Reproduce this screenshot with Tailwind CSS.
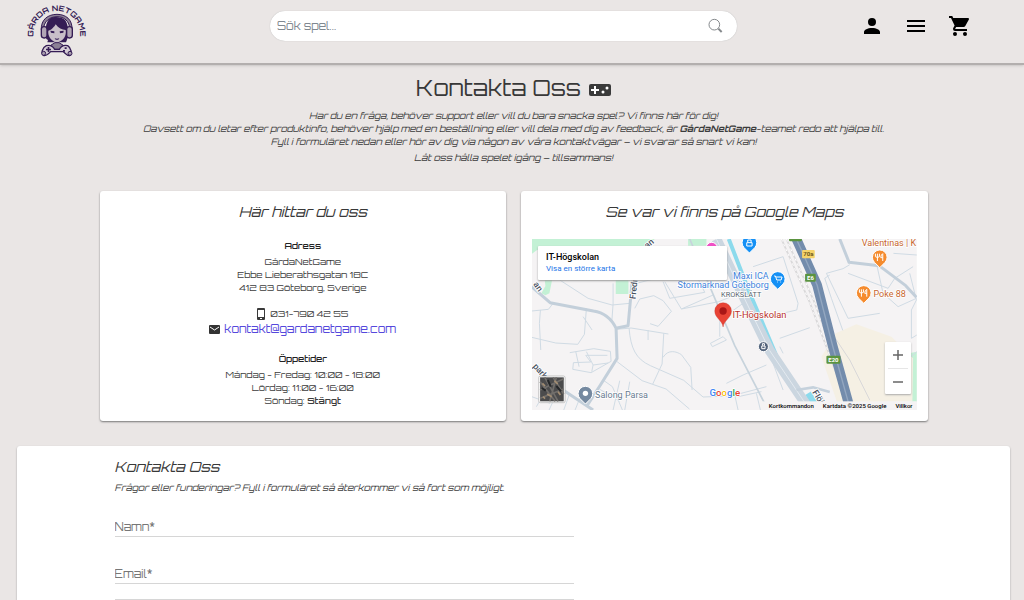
<!DOCTYPE html>
<html lang="sv">
<head>
<meta charset="utf-8">
<meta name="viewport" content="width=device-width, initial-scale=1">
<title>Kontakta Oss – GårdaNetGame</title>
<script src="https://cdn.jsdelivr.net/npm/@tailwindcss/browser@4"></script>
</head>
<body class="bg-[#eae6e5] font-['Orbitron','DejaVu_Sans',sans-serif] text-[9px] leading-[13px] text-[#3c3c3c]">
<header class="flex h-[65px] items-start border-b-2 border-[#b3afae] pr-[52px] pl-5 shadow-sm">
  <a href="#" aria-label="Gårda NetGame" class="h-[62px] w-20 shrink-0">
    <svg viewBox="0 0 240 186" class="h-full w-full" fill="#351c55">
      <path id="arc" d="M44 126A70 70 0 1 1 176 126" fill="none"/>
      <text font-weight="700" font-size="23"><textPath href="#arc" startOffset="50%" text-anchor="middle">GÅRDA NETGAME</textPath></text>
      <path d="M64 90C62 58 85 43 111 43S158 58 156 90L150 91C149 62 132 50 111 50S71 63 70 90Z" fill="#8c8095" stroke="#351c55" stroke-width="3"/>
      <path d="M79 117C72 98 78 61 91 55C101 48 128 50 136 61C145 75 149 105 141 119L138 127L82 127L84 120Z"/>
      <path d="M85 92C95 90 103 80 107 73C115 84 126 90 137 90C140 109 130 122 111 128C92 122 83 108 85 92Z" fill="#c9bfc9"/>
      <path d="M91 92l12 2v6l-10-2zM119 94l12-2-1 6-10 2zM104 114q7 4 14 0l-3 5h-8z"/>
      <rect x="64" y="80" width="17" height="34" rx="8" fill="#b1a5b5" stroke="#351c55" stroke-width="4"/>
      <rect x="140" y="80" width="17" height="34" rx="8" fill="#b1a5b5" stroke="#351c55" stroke-width="4"/>
      <path d="M92 136L105 128L117 128L130 136L126 148L96 148Z" fill="#8c8095" stroke="#351c55" stroke-width="3"/>
      <path d="M79 137C90 134 99 139 104 148L118 148C123 139 132 134 143 137C154 144 158 164 149 167C142 168 136 160 130 155L92 155C84 164 78 169 70 166C62 160 67 143 79 137Z" fill="#d5ccd5" stroke="#351c55" stroke-width="4"/>
      <path d="M83 141v5h-5v5h5v5h5v-5h5v-5h-5v-5zM134 142h6v5h-6zM129 150h6v5h-6z"/>
      <circle cx="71" cy="160" r="6" fill="#a99eae" stroke="#351c55" stroke-width="3"/>
      <circle cx="150" cy="160" r="6" fill="#a99eae" stroke="#351c55" stroke-width="3"/>
    </svg>
  </a>
  <form class="mt-[11px] mr-[123px] ml-[170px] flex h-[30px] flex-1 items-center rounded-full bg-white pr-[14px] pl-[7px] shadow-[0_0_1px_#aaa]">
    <input type="search" aria-label="Sök spel" placeholder="Sök spel..." class="min-w-0 flex-1 bg-transparent text-[11px] outline-none placeholder:text-[#808890]">
    <button type="button" aria-label="Sök">
      <svg class="block h-4 w-4" viewBox="0 0 24 24" fill="none" stroke="#85898c"><circle cx="11" cy="10" r="8" stroke-width="1.500"/><path d="M17 16l5 5" stroke-width="3"/></svg>
    </button>
  </form>
  <nav class="mt-[14px] flex gap-5 text-black">
    <a href="#" aria-label="Konto"><svg class="block h-6 w-6" viewBox="0 0 24 24" fill="currentColor"><path d="M12 4a4 4 0 0 1 4 4 4 4 0 0 1-4 4 4 4 0 0 1-4-4 4 4 0 0 1 4-4m0 10c4.420 0 8 1.790 8 4v2H4v-2c0-2.210 3.580-4 8-4Z"/></svg></a>
    <button type="button" aria-label="Meny"><svg class="block h-6 w-6" viewBox="0 0 24 24" fill="currentColor"><path d="M3 6h18v2H3zM3 11h18v2H3zM3 16h18v2H3z"/></svg></button>
    <a href="#" aria-label="Kundvagn"><svg class="block h-6 w-6" viewBox="0 0 24 24" fill="currentColor"><path d="M17 18a2 2 0 0 1 2 2 2 2 0 0 1-2 2 2 2 0 0 1-2-2c0-1.110.89-2 2-2M1 2h3.270l.94 2H20a1 1 0 0 1 1 1c0 .17-.05.34-.12.5l-3.580 6.470c-.34.61-1 1.030-1.750 1.030H8.100l-.9 1.630-.03.12a.25.25 0 0 0 .25.25H19v2H7a2 2 0 0 1-2-2c0-.35.09-.68.24-.96l1.360-2.450L3 4H1V2m6 16a2 2 0 0 1 2 2 2 2 0 0 1-2 2 2 2 0 0 1-2-2c0-1.110.89-2 2-2Z"/></svg></a>
  </nav>
</header>

<main class="pr-[14px] pl-[17px]">
  <section class="pt-[7px] text-center">
    <h1 class="flex items-center justify-center gap-2 text-[22px] leading-8 text-[#383838]">Kontakta Oss
      <svg class="mt-[3px] h-3 w-[22px]" viewBox="0 0 22 12"><rect width="22" height="12" rx="2" fill="#3a3a3a"/><path d="M5 2h2v3h3v2H7v3H5V7H2V5h3z" fill="#fff"/><circle cx="14" cy="8" r="1.500" fill="#fff"/><circle cx="18" cy="4" r="1.500" fill="#fff"/></svg>
    </h1>
    <p class="mt-[5px] italic">Har du en fråga, behöver support eller vill du bara snacka spel? Vi finns här för dig!<br>Oavsett om du letar efter produktinfo, behöver hjälp med en beställning eller vill dela med dig av feedback, är <strong>GårdaNetGame</strong>-teamet redo att hjälpa till.<br>Fyll i formuläret nedan eller hör av dig via någon av våra kontaktvägar – vi svarar så snart vi kan!</p>
    <p class="mt-[3px] italic">Låt oss hålla spelet igång – tillsammans!</p>
  </section>

  <div class="mx-auto mt-[27px] grid max-w-[828px] grid-cols-2 gap-[15px] text-center">
    <section class="rounded-[3px] bg-white pt-[11px] pb-[14px] shadow-[0_1px_2px_#777]">
      <h2 class="text-sm leading-5 text-[#383838] italic">Här hittar du oss</h2>
      <h3 class="mt-[17px] font-medium text-[#222]">Adress</h3>
      <address class="not-italic">
        <p class="mt-[3px]">GårdaNetGame<br>Ebbe Lieberathsgatan 18C<br>412 83 Göteborg, Sverige</p>
        <p class="mt-3 flex items-center justify-center gap-[5px] leading-4"><svg class="h-3 w-2" viewBox="0 0 8 12"><path fill="#3a3a3a" fill-rule="evenodd" d="M1 0h6a1 1 0 0 1 1 1v10a1 1 0 0 1-1 1H1a1 1 0 0 1-1-1V1a1 1 0 0 1 1-1zm0 2v7h6V2zm2 8v1h2v-1z"/></svg>031-790 42 55</p>
        <p class="flex items-center justify-center gap-1 text-[11px] leading-[14px]"><svg class="h-[9px] w-[11px]" viewBox="0 0 11 9"><rect width="11" height="9" rx="1" fill="#333"/><path d="M1 2l4.500 3L10 2" fill="none" stroke="#fff"/></svg><a href="mailto:kontakt@gardanetgame.com" class="text-[#5548dc]">kontakt@gardanetgame.com</a></p>
      </address>
      <h3 class="mt-[16px] font-medium text-[#222]">Öppetider</h3>
      <p class="mt-[3px]">Måndag - Fredag: 10:00 - 18:00<br>Lördag: 11:00 - 16:00<br>Söndag: <strong class="font-semibold">Stängt</strong></p>
    </section>

    <section class="rounded-[3px] bg-white px-[11px] pt-[11px] pb-[10px] shadow-[0_1px_2px_#777]">
      <h2 class="text-sm leading-5 text-[#383838] italic">Se var vi finns på Google Maps</h2>
      <div class="relative mt-[17px] h-[171px] overflow-hidden text-left font-[Roboto,sans-serif]">
        <svg class="h-full w-full" viewBox="36 27 1155 513" preserveAspectRatio="xMidYMid slice" font-family="Roboto, sans-serif">
          <rect x="36" y="27" width="1155" height="513" fill="#f5f3f4"/>
          <path d="M36 27H405L370 60H52L36 72zM505 27h55v20h-55zM75 150h22l-8 40-12 6-12-6 12-22zM288 150h38v42h-38zM1168 370l23-5v150h-15z" fill="#c3f1d5"/>
          <path d="M905 380L948 310L1010 283L1115 320L1180 385L1178 514L1060 516L1000 540H960z" fill="#f5f0e4"/>
          <g fill="none" stroke="#d0dbe4" stroke-width="3">
            <path d="M36 243l50-5 14-18M62 240l-3 40 4 80M36 322l72 17 66 4 20-30 6-78M190 260l27 40M120 150l85 55 72 20 53-5M280 160v62l-4 55M330 220l20-60 80-20M345 235l15-28 42-10 28 15 25 32-40 45-24-8M290 298l44-4 112 18M385 300v30M328 295c5 60 20 92 64 112l100 44 58 50 108-4M432 310l-5 92-28 60M430 382c15-25 40-18 55-8l28 38 4 68M292 395l75 57 72 25 70 60M435 155l50 82 112-22 50-20M430 155l20 50 105-18-20-40M485 237l95-42"/>
            <path d="M150 368l48-8 24-4 50 8 2 30-60 34-55-10 2-20 52-2-15-20h65M168 365l10 45M200 365l20 40 45-6M220 405l-4 20M36 500l55 20M90 460l-40 70M118 475l-30 65M150 490l-18 50M180 505l-14 35M250 450l28 20 30 70M300 452l-20 88M330 455l-15 85M240 478l60 35M572 340l38-20 10 10-42 20zM620 460l50-25 70-30M740 470l-95 25 10 45M710 490l12 50M655 500l70-15M780 325l90-32M790 370l-10-20M700 110l90-30 45 140-4 20-110 25M1080 250l-95 15-65-135 50-14 20-12M930 135l-15 10 20 60 34 96M1070 100l20 90 45 40 55-25M1180 110l-55 35-20 30-120-45M1191 75l-70-5M1170 130l20 80-15 30v85l16-10M1174 380l17-15M600 320v-50l70-50M760 400l30 80"/>
          </g>
          <path d="M510 27l135 320 100 193" fill="none" stroke="#c7d3dc" stroke-width="5"/>
          <g fill="none" stroke="#c3cfda" stroke-linejoin="round">
            <path d="M36 170l55 48 130 25c35 5 55 25 68 52l3 90-50 80-42 65M288 295l37-8 12-130 40-98M130 480l90 60" stroke-width="9"/>
            <path d="M960 27l28 70 90 10 80 60 32 35" stroke-width="9"/>
          </g>
          <path d="M627 27l60 155 100 236" fill="none" stroke="#8cdaec" stroke-width="12"/>
          <path d="M865 490l30 50" stroke="#8cdaec" stroke-width="20"/>
          <path d="M590 27l80 170 80 165 120 178" fill="none" stroke="#cbd6e0" stroke-width="30"/>
          <path d="M590 27l80 170 80 165 120 178" fill="none" stroke="#e4eaf0" stroke-width="3"/>
          <path d="M830 480l50-8 50 14" fill="none" stroke="#c5d1dc" stroke-width="8"/>
          <g fill="none" stroke="#d9d8d9" stroke-width="5"><path d="M785 27l85 190 90 240 20 83M800 27l82 185 86 230 35 98"/><path d="M930 300l60 90 60 120" stroke-width="3"/></g>
          <g fill="none" stroke="#fff" stroke-width="3" stroke-dasharray="8 8"><path d="M785 27l85 190 90 240 20 83M800 27l82 185 86 230 35 98"/></g>
          <path d="M830 27L892 165L938 345L992 540" fill="none" stroke="#738cac" stroke-width="29" stroke-linejoin="round"/>
          <path d="M830 27L892 165L938 345L992 540" fill="none" stroke="#93a7c0" stroke-width="4"/>
          <g font-size="18" font-weight="700" fill="#fff" text-anchor="middle">
            <rect x="808" y="16" width="38" height="18" rx="3" fill="#5b9440"/>
            <rect x="847" y="60" width="38" height="25" rx="3" fill="#f6d36a"/><text x="866" y="79" fill="#6c571c">70a</text>
            <rect x="856" y="131" width="32" height="24" rx="3" fill="#5b9440"/><text x="872" y="150">E6</text>
            <rect x="920" y="377" width="42" height="24" rx="3" fill="#5b9440"/><text x="941" y="396">E20</text>
          </g>
          <g font-size="26" font-weight="500" fill="#47505e" stroke="#fff" stroke-width="5" paint-order="stroke">
            <text transform="translate(382 56) rotate(-38)">an</text>
            <text transform="translate(40 163) rotate(55)">an</text>
            <text transform="translate(347 208) rotate(-84)">Fredr</text>
            <text transform="translate(38 410) rotate(48)">park</text>
            <text transform="translate(877 487) rotate(58)">Flöj</text>
          </g>
          <g stroke="#fff" stroke-width="3">
            <path d="M689 69l-16-16a22 22 0 1 1 32 0z" fill="#1590f5"/>
            <path d="M774 178l-16-16a22 22 0 1 1 32 0z" fill="#1590f5"/>
            <path d="M1080 113l-16-16a22 22 0 1 1 32 0z" fill="#f58b2e"/>
            <path d="M1032 220l-16-16a22 22 0 1 1 32 0z" fill="#f58b2e"/>
            <path d="M197 522l-16-16a22 22 0 1 1 32 0z" fill="#7589a0"/>
            <circle cx="576" cy="54" r="17" fill="#f04fc6"/>
            <circle cx="731" cy="350" r="15" fill="#52637b"/>
          </g>
          <circle cx="197" cy="490" r="8" fill="#fff"/>
          <g fill="none" stroke="#fff" stroke-width="3">
            <path id="fork" d="M1073 71v22M1067 71v9q6 5 12 0v-9M1089 93V71q-6 3-6 12h6"/>
            <use href="#fork" x="-48" y="107"/>
            <path d="M763 138h4l4 12h13l3-9h-18M772 156h2M782 156h2M681 38h16v10h-16zM684 37v-7h10v7M726 348h10v8h-10zM728 347v-6h6v6"/>
          </g>
          <g stroke="#fff" stroke-width="5" paint-order="stroke" font-size="27">
            <text x="747" y="146" text-anchor="end" fill="#4183dc">Maxi ICA</text>
            <text x="747" y="173" text-anchor="end" fill="#4183dc">Stormarknad Göteborg</text>
            <text x="604" y="200" font-size="22" fill="#555f6b">KROKSLÄTT</text>
            <text x="638" y="263" font-size="28" fill="#b9322c">IT-Högskolan</text>
            <text x="1026" y="48" fill="#c7662d">Valentinas | K</text>
            <text x="1061" y="202" fill="#c7662d">Poke 88</text>
            <text x="226" y="503" fill="#687b90">Salong Parsa</text>
          </g>
          <path d="M610 291C607 270 585 264 585 243a25 25 0 1 1 50 0C635 264 613 270 610 291z" fill="#e84335" stroke="#c33429" stroke-width="1"/><circle cx="610" cy="243" r="11" fill="#a91616"/>
          <text x="569" y="498" font-size="29" font-weight="500" fill="#4285f4" stroke="#fff" stroke-width="4" paint-order="stroke">G<tspan fill="#ea4335">o</tspan><tspan fill="#fbbc05">o</tspan>g<tspan fill="#34a853">l</tspan><tspan fill="#ea4335">e</tspan></text>
          <rect x="725" y="514" width="466" height="26" fill="#f5f3f4"/>
          <g><rect x="57" y="438" width="79" height="80" rx="5" fill="#fff" stroke="#aaa" stroke-width="2"/><path d="M61 442h71v72H61z" fill="#4b4b4c"/><path d="M61 455l45 59M75 442l40 72M61 480l71-34M100 442l32 50M61 505l71-28M90 514l20-72" stroke="#716e6b" stroke-width="5"/><path d="M68 460l8 8M104 452l10 10M82 492l14 8M115 485l7 10M70 500l6 6" stroke="#a38d72" stroke-width="5"/><path d="M84 450l9 20M110 468l14 16M66 474l12 8" stroke="#252729" stroke-width="6"/></g>
        </svg>
        <div class="absolute top-[7px] left-[6px] w-[189px] rounded-[1px] bg-white py-[5px] pl-2 text-[8px] leading-3 shadow-[0_1px_2px_#999]">
          <p class="text-[9px] font-medium text-black">IT-Högskolan</p>
          <a href="#" class="block text-[#2475e8]">Visa en större karta</a>
        </div>
        <div class="absolute right-[6px] bottom-[16px] flex w-[26px] flex-col items-center rounded-[1px] bg-white text-[#666] shadow-[0_1px_2px_#aaa]">
          <button type="button" aria-label="Zooma in" class="flex h-[26px] w-full items-center justify-center"><svg class="h-[10px] w-[10px]" viewBox="0 0 10 10" stroke="currentColor" stroke-width="1.500"><path d="M0 5h10M5 0v10"/></svg></button>
          <span class="h-px w-5 bg-[#e6e6e6]"></span>
          <button type="button" aria-label="Zooma ut" class="flex h-[25px] w-full items-center justify-center"><svg class="h-[10px] w-[10px]" viewBox="0 0 10 10" stroke="currentColor" stroke-width="1.500"><path d="M0 5h10"/></svg></button>
        </div>
        <div class="absolute right-1 bottom-0 flex gap-[9px] text-[6px] leading-[8px] font-medium text-black"><a href="#">Kortkommandon</a><span>Kartdata ©2025 Google</span><a href="#">Villkor</a></div>
      </div>
    </section>
  </div>

  <section class="mt-[25px] rounded-[3px] bg-white pt-[11px] pb-6 shadow-[0_1px_2px_#999]">
    <div class="mx-auto max-w-[828px] px-[15px]">
      <h2 class="text-sm leading-5 text-[#383838] italic">Kontakta Oss</h2>
      <p class="mt-1 italic">Frågor eller funderingar? Fyll i formuläret så återkommer vi så fort som möjligt.</p>
      <form class="w-[459px] max-w-full text-[11px]">
        <input type="text" aria-label="Namn" placeholder="Namn*" class="mt-[23px] block h-5 w-full border-b border-[#d6d6d6] outline-none placeholder:text-[#777]">
        <input type="email" aria-label="Email" placeholder="Email*" class="mt-[27px] block h-5 w-full border-b border-[#d6d6d6] outline-none placeholder:text-[#777]">
        <textarea aria-label="Meddelande" class="mt-[15px] block h-24 w-full border border-[#d6d6d6] outline-none"></textarea>
      </form>
    </div>
  </section>
</main>
</body>
</html>
